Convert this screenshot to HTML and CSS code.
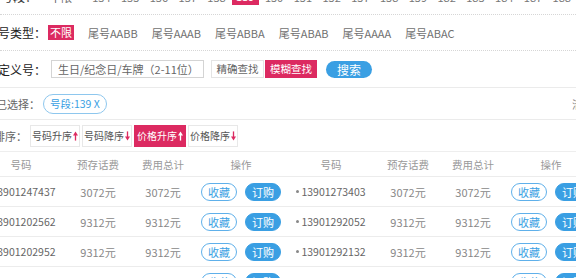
FILE: index.html
```html
<!DOCTYPE html>
<html lang="zh">
<head>
<meta charset="utf-8">
<title>选号</title>
<link rel="stylesheet" href="styles.css">
</head>
<body>
<div class="page">
  <div class="row row-seg">
    <span class="lbl lbl-seg">号段：</span>
    <span class="seg-any">不限</span>
    <span class="seg">134</span>
    <span class="seg">135</span>
    <span class="seg">136</span>
    <span class="seg">137</span>
    <span class="seg">138</span>
    <span class="seg on">139</span>
    <span class="seg">150</span>
    <span class="seg">151</span>
    <span class="seg">152</span>
    <span class="seg">157</span>
    <span class="seg">158</span>
    <span class="seg">159</span>
    <span class="seg">182</span>
    <span class="seg">183</span>
    <span class="seg">184</span>
    <span class="seg">187</span>
    <span class="seg">188</span>
  </div>

  <div class="row row-type">
    <span class="lbl lbl-main">靓号类型：</span>
    <span class="pill-pink">不限</span>
    <span class="type">尾号AABB</span>
    <span class="type">尾号AAAB</span>
    <span class="type">尾号ABBA</span>
    <span class="type">尾号ABAB</span>
    <span class="type">尾号AAAA</span>
    <span class="type">尾号ABAC</span>
  </div>

  <div class="row row-custom">
    <span class="lbl lbl-main">自定义号：</span>
    <input class="field" type="text" placeholder="生日/纪念日/车牌（2-11位）">
    <span class="mode">精确查找</span>
    <span class="mode mode-on">模糊查找</span>
    <span class="search">搜索</span>
  </div>

  <div class="row row-sel">
    <span class="lbl lbl-sel">已选择：</span>
    <span class="tag">号段:139 X</span>
    <span class="clear">清空</span>
  </div>

  <div class="row row-sort">
    <span class="lbl lbl-sort">排序：</span>
    <span class="sort">号码升序<svg class="arr" viewBox="0 0 6 11"><path d="M3 11V3.5" /><polygon points="0,5 3,0 6,5" /></svg></span>
    <span class="sort">号码降序<svg class="arr" viewBox="0 0 6 11"><path d="M3 0V7.5" /><polygon points="0,6 3,11 6,6" /></svg></span>
    <span class="sort sort-on">价格升序<svg class="arr" viewBox="0 0 6 11"><path d="M3 11V3.5" /><polygon points="0,5 3,0 6,5" /></svg></span>
    <span class="sort">价格降序<svg class="arr" viewBox="0 0 6 11"><path d="M3 0V7.5" /><polygon points="0,6 3,11 6,6" /></svg></span>
  </div>

  <div class="tables">
    <div class="tbl">
      <div class="tr th"><span>号码</span><span>预存话费</span><span>费用总计</span><span>操作</span></div>
      <div class="tr"><span class="num"><i class="dot"></i>13901247437</span><span>3072元</span><span>3072元</span><span class="ops"><span class="fav">收藏</span><span class="buy">订购</span></span></div>
      <div class="tr"><span class="num"><i class="dot"></i>13901202562</span><span>9312元</span><span>9312元</span><span class="ops"><span class="fav">收藏</span><span class="buy">订购</span></span></div>
      <div class="tr"><span class="num"><i class="dot"></i>13901202952</span><span>9312元</span><span>9312元</span><span class="ops"><span class="fav">收藏</span><span class="buy">订购</span></span></div>
      <div class="tr"><span class="num"><i class="dot"></i>13901203152</span><span>9312元</span><span>9312元</span><span class="ops"><span class="fav">收藏</span><span class="buy">订购</span></span></div>
    </div>
    <div class="tbl">
      <div class="tr th"><span>号码</span><span>预存话费</span><span>费用总计</span><span>操作</span></div>
      <div class="tr"><span class="num"><i class="dot"></i>13901273403</span><span>3072元</span><span>3072元</span><span class="ops"><span class="fav">收藏</span><span class="buy">订购</span></span></div>
      <div class="tr"><span class="num"><i class="dot"></i>13901292052</span><span>9312元</span><span>9312元</span><span class="ops"><span class="fav">收藏</span><span class="buy">订购</span></span></div>
      <div class="tr"><span class="num"><i class="dot"></i>13901292132</span><span>9312元</span><span>9312元</span><span class="ops"><span class="fav">收藏</span><span class="buy">订购</span></span></div>
      <div class="tr"><span class="num"><i class="dot"></i>13901293252</span><span>9312元</span><span>9312元</span><span class="ops"><span class="fav">收藏</span><span class="buy">订购</span></span></div>
    </div>
  </div>
</div>
</body>
</html>
```

FILE: styles.css
```css
* { box-sizing: border-box; margin: 0; padding: 0; }

html, body { background: #fff; }

body {
  width: 576px;
  height: 278px;
  overflow: hidden;
  font-family: "Noto Sans CJK SC", "Noto Sans", sans-serif;
  font-size: 11px;
  color: #666;
}

.page { width: 576px; }

.row {
  display: flex;
  align-items: center;
  white-space: nowrap;
}

/* row 1: number segments (cut at top) */
.row-seg {
  height: 15px;
  align-items: flex-end;
  padding-bottom: 9px;
  border-bottom: 1px dotted #d6d6d6;
}
.lbl-seg { margin-left: 1px; font-size: 12px; color: #333; line-height: 16px; }
.seg-any { margin-left: 8px; padding: 0 5px; line-height: 16px; height: 16px; }
.seg {
  width: 30px;
  text-align: center;
  line-height: 16px;
  height: 16px;
  color: #777;
}
.seg-any + .seg { margin-left: 10px; }
.seg.on { background: #dc2a61; color: #fff; width: 28px; margin: 0 1px; height: 17px; }

/* row 2: type */
.row-type {
  height: 36px;
  border-bottom: 1px dotted #d6d6d6;
}
.lbl-main {
  margin-left: -14px;
  font-size: 12px;
  color: #222;
  width: 62px;
}
.pill-pink {
  background: #dc2a61;
  color: #fff;
  height: 15px;
  line-height: 15px;
  width: 26px;
  text-align: center;
  font-size: 11px;
}
.type {
  margin-left: 14px;
  font-size: 11px;
  color: #707070;
}

/* row 3: custom */
.row-custom {
  height: 37px;
  border-bottom: 1px solid #ebebeb;
}
.field {
  margin-left: 3px;
  width: 153px;
  height: 18px;
  border: 1px solid #d4d4d4;
  padding: 0 6px;
  font-family: inherit;
  font-size: 11px;
  color: #666;
  outline: none;
}
.field::placeholder { color: #666; }
.mode {
  height: 18px;
  line-height: 16px;
  width: 53px;
  text-align: center;
  border: 1px solid #e4e4e4;
  color: #666;
  font-size: 10.5px;
  background: #fff;
}
.field + .mode { margin-left: 7px; }
.mode-on {
  background: #dc2a61;
  border-color: #dc2a61;
  color: #fff;
  width: 52px;
  margin-left: 1px;
}
.search {
  margin-left: 9px;
  width: 46px;
  height: 17px;
  line-height: 17px;
  border-radius: 9px;
  background: #3a9fe3;
  color: #fff;
  font-size: 12px;
  text-align: center;
}

/* row 4: selected */
.row-sel {
  height: 32px;
  border-bottom: 1px solid #ebebeb;
}
.lbl-sel { margin-left: -4px; font-size: 11px; color: #666; width: 47px; }
.tag {
  height: 20px;
  line-height: 18px;
  padding: 0 6px;
  border: 1px solid #8ec7ee;
  border-radius: 10px;
  color: #3a9fe3;
  font-size: 10.5px;
}
.clear {
  margin-left: auto;
  margin-right: -18px;
  color: #888;
  font-size: 11px;
}

/* row 5: sort */
.row-sort {
  height: 32px;
  border-bottom: 1px solid #eeeeee;
}
.lbl-sort { margin-left: -6px; font-size: 11px; color: #666; width: 36px; }
.sort {
  display: flex;
  align-items: center;
  justify-content: center;
  gap: 1px;
  height: 22px;
  width: 50px;
  border: 1px solid #e8e8e8;
  color: #555;
  font-size: 10px;
  margin-right: 2px;
}
.sort-on {
  background: #dc2a61;
  border-color: #dc2a61;
  color: #fff;
  width: 52px;
}
.arr { width: 5px; height: 10px; flex: none; }
.arr path { stroke: #dc2a61; stroke-width: 1.6; fill: none; }
.arr polygon { fill: #dc2a61; }
.sort-on .arr path { stroke: #fff; }
.sort-on .arr polygon { fill: #fff; }

/* tables */
.tables {
  display: flex;
  margin-left: -21px;
}
.tbl { width: 310px; flex: none; }
.tr {
  display: grid;
  grid-template-columns: 84px 70px 60px 96px;
  align-items: center;
  height: 30px;
  border-bottom: 1px solid #ececec;
  text-align: center;
  color: #888;
  font-size: 11px;
  white-space: nowrap;
}
.th {
  height: 25px;
  color: #999;
  font-size: 10.5px;
}
.num {
  color: #666;
  font-size: 10.5px;
  display: flex;
  align-items: center;
  justify-content: center;
}
.dot {
  width: 3px;
  height: 3px;
  border-radius: 50%;
  background: #888;
  margin-right: 2px;
}
.ops {
  display: flex;
  justify-content: center;
  gap: 8px;
}
.fav, .buy {
  width: 36px;
  height: 18px;
  line-height: 16px;
  border-radius: 9px;
  font-size: 11px;
  text-align: center;
}
.fav {
  border: 1px solid #5fb0ea;
  color: #3a9fe3;
  background: #fff;
}
.buy {
  border: 1px solid #3a9fe3;
  background: #3a9fe3;
  color: #fff;
}
```
